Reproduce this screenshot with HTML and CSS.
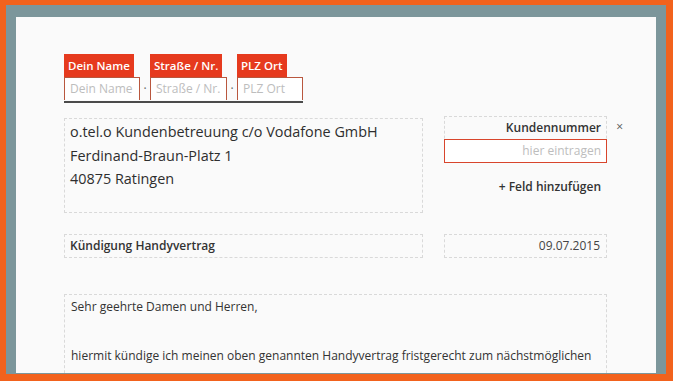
FILE: index.html
```html
<!DOCTYPE html>
<html lang="de">
<head>
<meta charset="utf-8">
<title>Kündigung Handyvertrag</title>
<link rel="stylesheet" href="styles.css">
</head>
<body>
<div class="shell">
  <div class="page">
    <div class="sender">
      <div class="field">
        <span class="tag">Dein Name</span>
        <div class="input w-name">Dein Name</div>
      </div>
      <span class="sep">·</span>
      <div class="field">
        <span class="tag">Straße / Nr.</span>
        <div class="input w-street">Straße / Nr.</div>
      </div>
      <span class="sep">·</span>
      <div class="field">
        <span class="tag">PLZ Ort</span>
        <div class="input w-city">PLZ Ort</div>
      </div>
    </div>

    <div class="row top-row">
      <div class="box address">
        <div>o.tel.o Kundenbetreuung c/o Vodafone GmbH</div>
        <div>Ferdinand-Braun-Platz 1</div>
        <div>40875 Ratingen</div>
      </div>
      <div class="side">
        <div class="custom">
          <div class="custom-label">Kundennummer</div>
          <div class="custom-input">hier eintragen</div>
          <span class="remove">×</span>
        </div>
        <div class="add">+ Feld hinzufügen</div>
      </div>
    </div>

    <div class="row subject-row">
      <div class="box subject">Kündigung Handyvertrag</div>
      <div class="box date">09.07.2015</div>
    </div>

    <div class="box letter">
      <p>Sehr geehrte Damen und Herren,</p>
      <p class="blank">&nbsp;</p>
      <p>hiermit kündige ich meinen oben genannten Handyvertrag fristgerecht zum nächstmöglichen Zeitpunkt. Bitte senden Sie mir eine schriftliche Bestätigung der Kündigung unter Angabe des Beendigungszeitpunktes zu.</p>
    </div>
  </div>
</div>
</body>
</html>
```

FILE: styles.css
```css
html, body {
  margin: 0;
  padding: 0;
  height: 381px;
  overflow: hidden;
}

body {
  font-family: "Open Sans", "DejaVu Sans", sans-serif;
  color: #333;
}

.shell {
  box-sizing: border-box;
  height: 381px;
  border-style: solid;
  border-color: #f2621d;
  border-width: 5px 7px 7px 6px;
  background: #7c969b;
  padding: 12px 10px 1px 10px;
}

.page {
  box-sizing: border-box;
  height: 100%;
  background: #fafafa;
  padding: 36px 49px 0 48px;
  overflow: hidden;
}

/* sender line */
.sender {
  display: inline-flex;
  align-items: flex-end;
  padding-bottom: 1px;
  border-bottom: 2px solid #4a4a4a;
}

.field {
  display: flex;
  flex-direction: column;
  align-items: flex-start;
}

.tag {
  background: #e63a1e;
  color: #fff;
  font-size: 11.5px;
  font-weight: 600;
  height: 23px;
  line-height: 23px;
  padding: 0 4px;
  white-space: nowrap;
}

.input {
  box-sizing: border-box;
  height: 23px;
  line-height: 21px;
  border: 1px solid #b9573e;
  border-bottom: none;
  background: #fff;
  color: #bdbdbd;
  font-size: 12px;
  padding-left: 5px;
  white-space: nowrap;
}

.w-name { width: 76px; }
.w-street { width: 77px; }
.w-city { width: 66px; }

.sep {
  width: 10px;
  text-align: center;
  font-size: 12px;
  color: #666;
  line-height: 23px;
}

/* rows */
.row {
  display: flex;
  gap: 21px;
  width: 543px;
}

.box {
  box-sizing: border-box;
  border: 1px dashed #d9d9d9;
}

.top-row {
  margin-top: 15px;
  align-items: flex-start;
}

.address {
  width: 359px;
  height: 95px;
  font-size: 14.4px;
  line-height: 23.5px;
  padding: 1px 5px 0;
  color: #2e2e2e;
}

.side {
  width: 163px;
  margin-top: -2px;
  display: flex;
  flex-direction: column;
  align-items: stretch;
}

.custom {
  position: relative;
  border: 1px dashed #d9d9d9;
  border-bottom: none;
}

.custom-label {
  text-align: right;
  font-size: 12px;
  font-weight: 600;
  line-height: 21px;
  padding: 0 5px 0 0;
  color: #333;
}

.custom-input {
  box-sizing: border-box;
  height: 24px;
  margin: 1px -1px 0;
  border: 1px solid #d8452c;
  background: #fff;
  color: #bdbdbd;
  font-size: 12px;
  line-height: 22px;
  text-align: right;
  padding-right: 5px;
}

.remove {
  position: absolute;
  right: -17px;
  top: 1px;
  font-size: 12px;
  line-height: 18px;
  color: #555;
}

.add {
  margin-top: 13px;
  text-align: right;
  padding-right: 6px;
  font-size: 12px;
  font-weight: 600;
  line-height: 22px;
  color: #333;
}

.subject-row {
  margin-top: 21px;
}

.subject, .date {
  height: 24px;
  font-size: 12px;
  line-height: 22px;
}

.subject {
  width: 359px;
  font-weight: 600;
  padding-left: 5px;
}

.date {
  width: 163px;
  text-align: right;
  padding-right: 6px;
  color: #444;
}

.letter {
  margin-top: 36px;
  width: 543px;
  padding: 0 6px;
  font-size: 12px;
  line-height: 24.5px;
  color: #333;
}

.letter p {
  margin: 0;
}
```
